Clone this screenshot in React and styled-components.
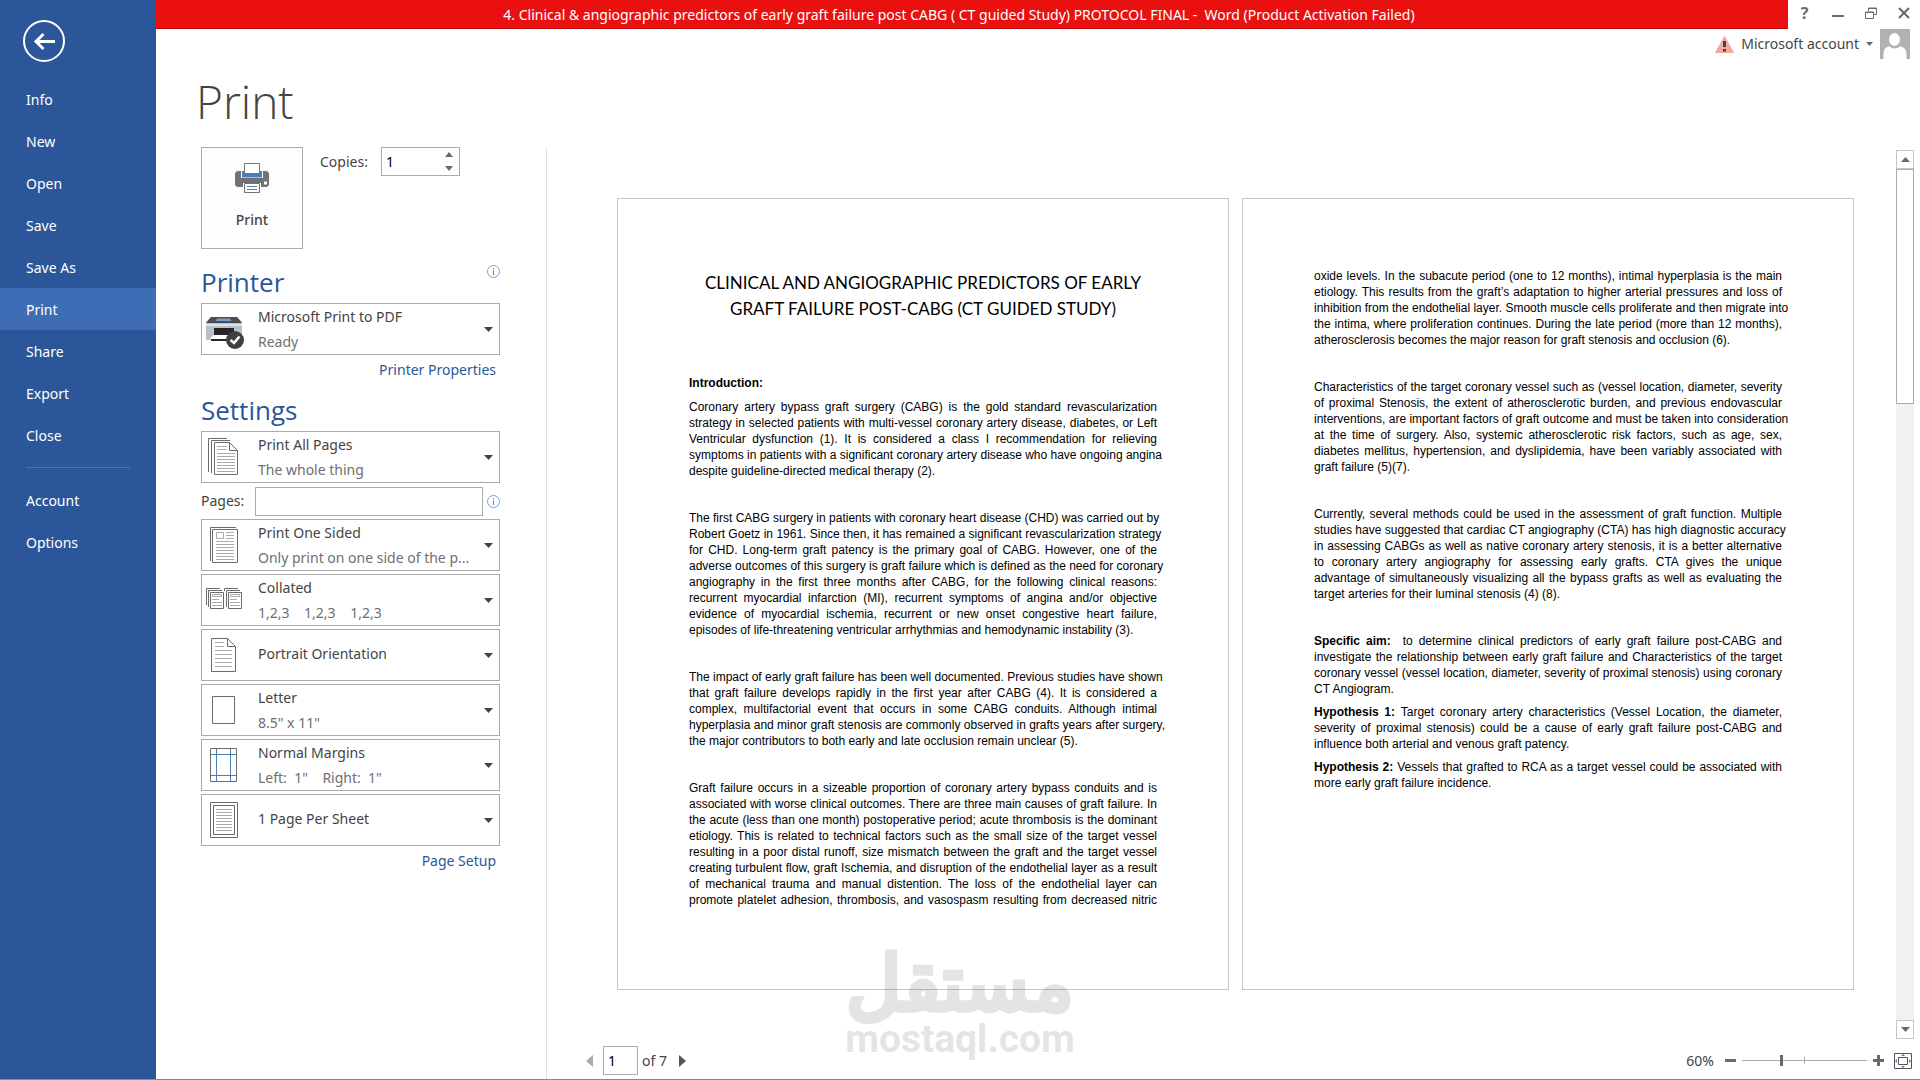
import React from 'react';
import styled, { createGlobalStyle } from 'styled-components';

const ui = '"Noto Sans", "Open Sans", sans-serif';
const line = '#ababab';
const blue = '#2b579a';

const GlobalStyle = createGlobalStyle`
  *, *::before, *::after { box-sizing: border-box; }
  body { margin: 0; background: #fff; color: #444; font: 14px/20px ${ui}; }
  button, input { font: inherit; color: inherit; margin: 0; padding: 0; border-radius: 0; }
  button { background: none; border: 0; cursor: pointer; }
  h1, h2, h3, p { margin: 0; font-weight: 400; }
  svg { display: block; flex: none; }
`;

const Shell = styled.div`
  display: grid;
  grid-template-columns: 156px minmax(0, 1fr);
  min-height: 100vh;
  border-bottom: 1px solid #8a8a8a;
`;

/* ---------- sidebar ---------- */
const Sidebar = styled.aside`
  display: flex;
  flex-direction: column;
  background: ${blue};
  color: #fff;
`;
const BackButton = styled.button`
  width: 42px;
  height: 42px;
  margin: 20px 0 16px 23px;
`;
const NavList = styled.nav`
  display: flex;
  flex-direction: column;
`;
const NavLink = styled.a`
  height: 42px;
  padding-left: 26px;
  line-height: 44px;
  color: #fff;
  text-decoration: none;
  background: ${(p) => (p.$active ? '#3e6db5' : 'transparent')};
`;
const NavRule = styled.hr`
  width: 104px;
  height: 1px;
  margin: 11px 26px;
  border: 0;
  background: #4a74b4;
`;

/* ---------- header ---------- */
const Main = styled.main`
  display: flex;
  flex-direction: column;
  min-width: 0;
`;
const TopBar = styled.header`
  display: flex;
  height: 29px;
`;
const TitleStrip = styled.div`
  flex: 1;
  padding-right: 26px;
  border-bottom: 1px solid #b80c0c;
  background: #ea1010;
  color: #fff;
  text-align: center;
  line-height: 29px;
  white-space: pre;
`;
const WindowButton = styled.button`
  display: flex;
  align-items: center;
  justify-content: center;
  width: 33px;
  height: 26px;
  color: #6a6a6a;
  font-size: 16px;
  font-weight: 700;
`;
const AccountBar = styled.div`
  display: flex;
  justify-content: flex-end;
  padding-right: 10px;
`;
const AccountButton = styled.button`
  display: flex;
  align-items: center;
  height: 30px;
  gap: 7px;
`;
const PageTitle = styled.h1`
  padding: 11px 40px 15px;
  font: 300 46px/62px "Open Sans", "Noto Sans", sans-serif;
`;
const Body = styled.div`
  display: flex;
  flex: 1;
`;

/* ---------- settings column ---------- */
const SettingsPane = styled.section`
  flex: none;
  width: 391px;
  padding: 0 46px 0 45px;
  border-right: 1px solid #e1e1e1;
`;
const PrintRow = styled.div`
  display: flex;
  align-items: flex-start;
  margin-bottom: 12px;
`;
const PrintButton = styled.button`
  display: flex;
  flex-direction: column;
  align-items: center;
  gap: 17px;
  width: 102px;
  height: 102px;
  margin-right: 17px;
  padding-top: 15px;
  border: 1px solid ${line};
  background: #fdfdfd;
  font-weight: 500;
`;
const CopiesLabel = styled.label`
  width: 61px;
  line-height: 30px;
`;
const Spinner = styled.div`
  display: flex;
  width: 79px;
  height: 29px;
  border: 1px solid ${line};
`;
const SpinnerInput = styled.input`
  flex: 1;
  min-width: 0;
  padding-left: 4px;
  border: 0;
  color: #000;
  appearance: textfield;
  &::-webkit-inner-spin-button { appearance: none; }
`;
const SpinnerArrows = styled.div`
  display: grid;
  grid-template-rows: 1fr 1fr;
  width: 20px;
`;
const ArrowButton = styled.button`
  display: flex;
  align-items: center;
  justify-content: center;
`;
const SectionHead = styled.div`
  display: flex;
  justify-content: space-between;
  height: 42px;
  color: ${blue};
`;
const SectionTitle = styled.h2`
  font: 400 26px/42px "Open Sans", "Noto Sans", sans-serif;
`;
const InfoButton = styled.button`
  display: flex;
  align-self: ${(p) => (p.$top ? 'flex-start' : 'center')};
  padding-top: ${(p) => (p.$top ? '4px' : '0')};
`;
const Choices = styled.div`
  display: grid;
  gap: 3px;
`;
const Choice = styled.button`
  display: flex;
  align-items: center;
  width: 100%;
  height: 52px;
  padding-right: 6px;
  border: 1px solid ${line};
  background: #fff;
  text-align: left;
`;
const ChoiceText = styled.span`
  display: flex;
  flex: 1;
  flex-direction: column;
  padding-bottom: ${(p) => (p.$single ? '4px' : '0')};
  line-height: 25px;
  white-space: pre;
`;
const ChoiceDetail = styled.span`
  color: #6f6f6f;
`;
const PaneLink = styled.a`
  display: block;
  padding: 5px 4px 9px 0;
  line-height: 20px;
  color: ${blue};
  text-align: right;
  text-decoration: none;
`;
const PagesRow = styled.div`
  display: flex;
  align-items: center;
  justify-content: space-between;
  height: 30px;
`;
const PagesLabel = styled.label`
  width: 54px;
`;
const PagesInput = styled.input`
  width: 228px;
  height: 29px;
  margin-right: 4px;
  padding: 0 5px;
  border: 1px solid ${line};
`;

/* ---------- preview ---------- */
const Preview = styled.section`
  display: flex;
  flex: 1;
  flex-direction: column;
  min-width: 0;
`;
const Canvas = styled.div`
  display: flex;
  flex: 1;
`;
const Sheets = styled.div`
  display: flex;
  flex: 1;
  align-items: flex-start;
  justify-content: center;
  gap: 13px;
  padding: 51px 42px 48px 70px;
`;
const Sheet = styled.article`
  width: 612px;
  height: 792px;
  padding: ${(p) => (p.$titled ? '71px' : '69px')} 71px 0;
  border: 1px solid #c6c6c6;
  background: #fff;
  color: #000;
  font: 12px/16px "Liberation Sans", Arial, sans-serif;
`;
const DocTitle = styled.h2`
  margin-bottom: 53px;
  font: 400 17px/26px Lato, Carlito, sans-serif;
  text-align: center;
`;
const DocHeading = styled.h3`
  margin-bottom: 8px;
  font-size: 12px;
  font-weight: 700;
`;
const Paragraph = styled.p`
  margin-bottom: ${(p) => (p.$tight ? '7px' : '31px')};
`;
const Line = styled.span`
  display: block;
  white-space: nowrap;
  text-align-last: ${(p) => (p.$last ? 'left' : 'justify')};
`;
const Scrollbar = styled.div`
  display: flex;
  flex-direction: column;
  width: 19px;
  margin: 3px 6px 0 0;
  background: #f1f1f1;
`;
const ScrollButton = styled.button`
  display: flex;
  align-items: center;
  justify-content: center;
  height: 19px;
  border: 1px solid #c6c6c6;
  background: #fff;
`;
const ScrollTrack = styled.div`
  flex: 1;
`;
const ScrollThumb = styled.div`
  height: 235px;
  border: 1px solid ${line};
  background: #fff;
`;
const StatusBar = styled.footer`
  display: flex;
  align-items: center;
  justify-content: space-between;
  height: 40px;
  padding: 3px 8px 0 39px;
`;
const StatusGroup = styled.div`
  display: flex;
  align-items: center;
  gap: ${(p) => p.$gap};
`;
const PageInput = styled.input`
  width: 35px;
  height: 29px;
  margin: 0 4px 0 10px;
  padding-left: 4px;
  border: 1px solid ${line};
  color: #000;
`;
const PageCount = styled.span`
  margin-right: 12px;
`;
const ZoomValue = styled.label`
  margin-right: 5px;
`;
const ZoomSlider = styled.input`
  appearance: none;
  width: 125px;
  height: 13px;
  background:
    linear-gradient(#ababab, #ababab) 62px 50% / 1px 7px no-repeat,
    linear-gradient(#ababab, #ababab) 0 50% / 100% 1px no-repeat;
  &::-webkit-slider-thumb {
    appearance: none;
    width: 3px;
    height: 11px;
    background: #6a6a6a;
  }
`;
const IconButton = styled.button`
  display: flex;
`;
const FitButton = styled(IconButton)`
  margin-left: 4px;
`;

const Watermark = styled.div`
  position: absolute;
  left: 50%;
  top: 939px;
  transform: translateX(-50%);
  color: #000;
  opacity: 0.1;
  text-align: center;
  pointer-events: none;
`;
const WatermarkArabic = styled.div`
  height: 77px;
  font: 700 76px/90px sans-serif;
  -webkit-text-stroke: 3px #000;
`;
const WatermarkLatin = styled.div`
  font: 700 39px/46px Roboto, sans-serif;
`;

/* ---------- drawings ---------- */
const Tri = ({ dir = 'down', w = 9, h = 5, fill = '#6a6a6a' }) => {
  const d = {
    down: `M0 0H${w}L${w / 2} ${h}Z`,
    up: `M0 ${h}H${w}L${w / 2} 0Z`,
    left: `M${w} 0V${h}L0 ${h / 2}Z`,
    right: `M0 0V${h}L${w} ${h / 2}Z`,
  }[dir];
  return <svg width={w} height={h} aria-hidden="true"><path d={d} fill={fill} /></svg>;
};

const InfoIcon = () => (
  <svg width="13" height="13" viewBox="0 0 13 13" fill="none" stroke="#7c9fd3" aria-hidden="true">
    <circle cx="6.5" cy="6.5" r="6" />
    <path d="M6.5 5.5V10M6.5 3V4.3" stroke="#4f7cc0" />
  </svg>
);

const BigPrinter = () => (
  <svg width="34" height="30" viewBox="0 0 34 30" aria-hidden="true">
    <path d="M2 8H32L34 10V22L32 24H2L0 22V10Z" fill="#737373" />
    <path d="M6 8H28V15H6Z" fill="#fff" />
    <path d="M7 8H27V14.5H7Z" fill="#4a7ebb" />
    <path d="M9.500 0.500H24.500V10.500H9.500Z" fill="#fff" stroke="#737373" />
    <path d="M29 18.500H32V21.500H29Z" fill="#fff" />
    <path d="M8 20H26V24H8Z" fill="#fff" />
    <path d="M9.500 20.500H24.500V29.500H9.500Z" fill="#fff" stroke="#737373" />
    <path d="M12 23.500H22M12 26.500H22" stroke="#4a7ebb" />
  </svg>
);

const rows = (x1, x2, from, to, step) => {
  let d = '';
  for (let y = from; y <= to; y += step) d += `M${x1} ${y}H${x2}`;
  return d;
};

const icons = {
  printer: (
    <>
      <path d="M9 13H35L40 18V33L36 36H4V18Z" fill="#b9c0c9" />
      <path d="M9 13H35L40 19H4Z" fill="#4d4d4d" />
      <path d="M15 14.500H28L29.500 17H13.500Z" fill="#6fa0dc" />
      <path d="M4 20H40V22H4Z" fill="#dfe4ea" />
      <path d="M12 24H32V32H12Z" fill="#262626" />
      <path d="M11 31H32L30 35H8Z" fill="#fff" />
      <path d="M9 35H32V37H9Z" fill="#262626" />
      <circle cx="33" cy="36" r="9" fill="#404040" />
      <path d="M28.500 36L32 39L37.500 32.500" stroke="#fff" strokeWidth="2.500" />
    </>
  ),
  all: (
    <g stroke="#6a6a6a">
      <path d="M6.500 40V6.500H25M9.500 41V8.500H28" />
      <path d="M12.500 10.500H27.500L35.500 18.500V42.500H12.500Z" fill="#fff" />
      <path d="M27.500 10.500V18.500H35.500" />
      <path d={'M15 14.500H25M15 17.500H25' + rows(15, 33, 21.5, 39.5, 3)} stroke="#ababab" />
    </g>
  ),
  sided: (
    <g stroke="#6a6a6a">
      <path d="M8.500 41V7.500H34" />
      <path d="M10.500 9.500H35.500V42.500H10.500Z" fill="#fff" />
      <path d="M14.500 12.500H21.500V18.500H14.500Z" stroke="#ababab" />
      <path d={rows(24, 32, 12.5, 18.5, 3) + rows(14, 32, 21.5, 39.5, 3)} stroke="#ababab" />
    </g>
  ),
  collated: (
    <g stroke="#6a6a6a">
      <path d="M4.500 30V13.500H18M6.500 32V15.500H20M22.500 16V13.500H36M24.500 32V15.500H38" />
      <path d="M8.500 17.500H21.500V33.500H8.500ZM26.500 17.500H39.500V33.500H26.500Z" fill="#fff" />
      <path
        d="M10.500 19.500H19.500V21.500H10.500ZM28.500 19.500H37.500V21.500H28.500ZM10 24.500H17M10 27.500H20M10 30.500H20M28 24.500H35M28 27.500H38M28 30.500H38"
        stroke="#ababab"
      />
    </g>
  ),
  portrait: (
    <g stroke="#6a6a6a">
      <path d="M9.500 8.500H25.500L33.500 16.500V41.500H9.500Z" />
      <path d="M25.500 8.500V16.500H33.500" />
      <path d={'M13 12.500H22M13 16.500H22' + rows(13, 30, 20.5, 36.5, 4)} stroke="#ababab" />
    </g>
  ),
  letter: <path d="M10.500 11.500H32.500V38.500H10.500Z" stroke="#6a6a6a" />,
  margins: (
    <g>
      <path d="M8.500 8.500H34.500V41.500H8.500Z" stroke="#6a6a6a" />
      <path d="M14.500 9V41M28.500 9V41M9 14.500H34M9 35.500H34" stroke="#4a7ebb" />
    </g>
  ),
  sheet: (
    <g stroke="#6a6a6a">
      <path d="M8.500 7.500H35.500V42.500H8.500Z" />
      <path d="M11.500 10.500H32.500V39.500H11.500Z" />
      <path d={rows(14, 30, 14.5, 36.5, 3)} stroke="#ababab" />
    </g>
  ),
};

const ChoiceIcon = ({ name }) => (
  <svg width="56" height="50" viewBox="0 0 56 50" fill="none" aria-hidden="true">{icons[name]}</svg>
);

const Option = ({ icon, title, detail }) => (
  <Choice type="button" aria-haspopup="listbox">
    <ChoiceIcon name={icon} />
    <ChoiceText $single={!detail}>
      <span>{title}</span>
      {detail && <ChoiceDetail>{detail}</ChoiceDetail>}
    </ChoiceText>
    <Tri fill="#444" />
  </Choice>
);

/* ---------- content ---------- */
const navTop = ['Info', 'New', 'Open', 'Save', 'Save As', 'Print', 'Share', 'Export', 'Close'];
const navBottom = ['Account', 'Options'];

const afterPages = [
  { icon: 'sided', title: 'Print One Sided', detail: 'Only print on one side of the p...' },
  { icon: 'collated', title: 'Collated', detail: '1,2,3    1,2,3    1,2,3' },
  { icon: 'portrait', title: 'Portrait Orientation' },
  { icon: 'letter', title: 'Letter', detail: '8.5" x 11"' },
  { icon: 'margins', title: 'Normal Margins', detail: 'Left:  1"    Right:  1"' },
  { icon: 'sheet', title: '1 Page Per Sheet' },
];

const pageOne = [
  { lines: [
    'Coronary artery bypass graft surgery (CABG) is the gold standard revascularization',
    'strategy in selected patients with multi-vessel coronary artery disease, diabetes, or Left',
    'Ventricular dysfunction (1). It is considered a class I recommendation for relieving',
    'symptoms in patients with a significant coronary artery disease who have ongoing angina',
    'despite guideline-directed medical therapy (2).',
  ] },
  { lines: [
    'The first CABG surgery in patients with coronary heart disease (CHD) was carried out by',
    'Robert Goetz in 1961. Since then, it has remained a significant revascularization strategy',
    'for CHD. Long-term graft patency is the primary goal of CABG. However, one of the',
    'adverse outcomes of this surgery is graft failure which is defined as the need for coronary',
    'angiography in the first three months after CABG, for the following clinical reasons:',
    'recurrent myocardial infarction (MI), recurrent symptoms of angina and/or objective',
    'evidence of myocardial ischemia, recurrent or new onset congestive heart failure,',
    'episodes of life-threatening ventricular arrhythmias and hemodynamic instability (3).',
  ] },
  { lines: [
    'The impact of early graft failure has been well documented. Previous studies have shown',
    'that graft failure develops rapidly in the first year after CABG (4). It is considered a',
    'complex, multifactorial event that occurs in some CABG conduits. Although intimal',
    'hyperplasia and minor graft stenosis are commonly observed in grafts years after surgery,',
    'the major contributors to both early and late occlusion remain unclear (5).',
  ] },
  { continues: true, lines: [
    'Graft failure occurs in a sizeable proportion of coronary artery bypass conduits and is',
    'associated with worse clinical outcomes. There are three main causes of graft failure. In',
    'the acute (less than one month) postoperative period; acute thrombosis is the dominant',
    'etiology. This is related to technical factors such as the small size of the target vessel',
    'resulting in a poor distal runoff, size mismatch between the graft and the target vessel',
    'creating turbulent flow, graft Ischemia, and disruption of the endothelial layer as a result',
    'of mechanical trauma and manual distention. The loss of the endothelial layer can',
    'promote platelet adhesion, thrombosis, and vasospasm resulting from decreased nitric',
  ] },
];

const pageTwo = [
  { lines: [
    'oxide levels. In the subacute period (one to 12 months), intimal hyperplasia is the main',
    'etiology. This results from the graft’s adaptation to higher arterial pressures and loss of',
    'inhibition from the endothelial layer. Smooth muscle cells proliferate and then migrate into',
    'the intima, where proliferation continues. During the late period (more than 12 months),',
    'atherosclerosis becomes the major reason for graft stenosis and occlusion (6).',
  ] },
  { lines: [
    'Characteristics of the target coronary vessel such as (vessel location, diameter, severity',
    'of proximal Stenosis, the extent of atherosclerotic burden, and previous endovascular',
    'interventions, are important factors of graft outcome and must be taken into consideration',
    'at the time of surgery. Also, systemic atherosclerotic risk factors, such as age, sex,',
    'diabetes mellitus, hypertension, and dyslipidemia, have been variably associated with',
    'graft failure (5)(7).',
  ] },
  { lines: [
    'Currently, several methods could be used in the assessment of graft function. Multiple',
    'studies have suggested that cardiac CT angiography (CTA) has high diagnostic accuracy',
    'in assessing CABGs as well as native coronary artery stenosis, it is a better alternative',
    'to coronary artery angiography for assessing early grafts. CTA gives the unique',
    'advantage of simultaneously visualizing all the bypass grafts as well as evaluating the',
    'target arteries for their luminal stenosis (4) (8).',
  ] },
  { tight: true, lead: 'Specific aim:', lines: [
    '\u00a0 to determine clinical predictors of early graft failure post-CABG and',
    'investigate the relationship between early graft failure and Characteristics of the target',
    'coronary vessel (vessel location, diameter, severity of proximal stenosis) using coronary',
    'CT Angiogram.',
  ] },
  { tight: true, lead: 'Hypothesis 1:', lines: [
    '\u00a0Target coronary artery characteristics (Vessel Location, the diameter,',
    'severity of proximal stenosis) could be a cause of early graft failure post-CABG and',
    'influence both arterial and venous graft patency.',
  ] },
  { tight: true, lead: 'Hypothesis 2:', lines: [
    '\u00a0Vessels that grafted to RCA as a target vessel could be associated with',
    'more early graft failure incidence.',
  ] },
];

const Prose = ({ items }) =>
  items.map(({ lines, lead, tight, continues }) => (
    <Paragraph key={lines[0]} $tight={tight}>
      {lines.map((text, i) => (
        <Line key={text} $last={i === lines.length - 1 && !continues}>
          {i === 0 && lead && <b>{lead}</b>}
          {text}{' '}
        </Line>
      ))}
    </Paragraph>
  ));

export default function App() {
  return (
    <>
      <GlobalStyle />
      <Shell>
        <Sidebar>
          <BackButton type="button" aria-label="Back">
            <svg width="42" height="42" viewBox="0 0 42 42" fill="none" stroke="#fff" aria-hidden="true">
              <circle cx="21" cy="21" r="20" strokeWidth="2" />
              <path d="M13 21.500H32" strokeWidth="3" />
              <path d="M20.500 14L13 21.500L20.500 29" strokeWidth="3" />
            </svg>
          </BackButton>
          <NavList>
            {navTop.map((n) => <NavLink key={n} href="#" $active={n === 'Print'}>{n}</NavLink>)}
            <NavRule />
            {navBottom.map((n) => <NavLink key={n} href="#">{n}</NavLink>)}
          </NavList>
        </Sidebar>

        <Main>
          <TopBar>
            <TitleStrip>
              {'4. Clinical & angiographic predictors of early graft failure post CABG ( CT guided Study) PROTOCOL FINAL -  Word (Product Activation Failed)'}
            </TitleStrip>
            <WindowButton type="button">?</WindowButton>
            <WindowButton type="button" aria-label="Minimize">
              <svg width="12" height="12"><path d="M0 8H12V10H0Z" fill="#6a6a6a" /></svg>
            </WindowButton>
            <WindowButton type="button" aria-label="Restore">
              <svg width="12" height="12" fill="none" stroke="#6a6a6a">
                <path d="M3.500 4V1H11.500V7.500H9M3 1.500H12" />
                <path d="M0.500 5H8.500V11.500H0.500ZM0 5.500H9" />
              </svg>
            </WindowButton>
            <WindowButton type="button" aria-label="Close window">
              <svg width="12" height="12"><path d="M1 1L11 11M11 1L1 11" stroke="#6a6a6a" strokeWidth="2" /></svg>
            </WindowButton>
          </TopBar>

          <AccountBar>
            <AccountButton type="button">
              <svg width="19" height="17" viewBox="0 0 19 17" aria-hidden="true">
                <path d="M9.500 0.500L18.500 16.500H0.500Z" fill="#f4a9a0" stroke="#f4a9a0" strokeLinejoin="round" />
                <path d="M8 5H11V11H8ZM8 13H11V15.500H8Z" fill="#444" />
              </svg>
              <span>Microsoft account</span>
              <Tri w={7} h={4} />
              <svg width="30" height="30" viewBox="0 0 30 30" aria-hidden="true">
                <path d="M0 0H30V30H0Z" fill="#b1b1b1" />
                <ellipse cx="14.500" cy="10.500" rx="5.500" ry="6.500" fill="#fff" />
                <path d="M3.500 30V25C3.500 20 6 17.500 10 17.500C12 20 17.500 20 19.500 17.500C23.500 17.500 26.500 20 26.500 25V30Z" fill="#fff" />
              </svg>
            </AccountButton>
          </AccountBar>

          <PageTitle>Print</PageTitle>

          <Body>
            <SettingsPane>
              <PrintRow>
                <PrintButton type="button"><BigPrinter />Print</PrintButton>
                <CopiesLabel htmlFor="copies">Copies:</CopiesLabel>
                <Spinner>
                  <SpinnerInput id="copies" type="number" defaultValue="1" />
                  <SpinnerArrows>
                    <ArrowButton type="button" aria-label="More copies"><Tri dir="up" w={8} /></ArrowButton>
                    <ArrowButton type="button" aria-label="Fewer copies"><Tri w={8} /></ArrowButton>
                  </SpinnerArrows>
                </Spinner>
              </PrintRow>

              <SectionHead>
                <SectionTitle>Printer</SectionTitle>
                <InfoButton type="button" $top aria-label="Printer status"><InfoIcon /></InfoButton>
              </SectionHead>
              <Option icon="printer" title="Microsoft Print to PDF" detail="Ready" />
              <PaneLink href="#">Printer Properties</PaneLink>

              <SectionHead><SectionTitle>Settings</SectionTitle></SectionHead>
              <Choices>
                <Option icon="all" title="Print All Pages" detail="The whole thing" />
                <PagesRow>
                  <PagesLabel htmlFor="pages">Pages:</PagesLabel>
                  <PagesInput id="pages" type="text" />
                  <InfoButton type="button" aria-label="Page range help"><InfoIcon /></InfoButton>
                </PagesRow>
                {afterPages.map((o) => <Option key={o.title} {...o} />)}
              </Choices>
              <PaneLink href="#">Page Setup</PaneLink>
            </SettingsPane>

            <Preview>
              <Canvas>
                <Sheets>
                  <Sheet $titled>
                    <DocTitle>
                      CLINICAL AND ANGIOGRAPHIC PREDICTORS OF EARLY<br />
                      GRAFT FAILURE POST-CABG (CT GUIDED STUDY)
                    </DocTitle>
                    <DocHeading>Introduction:</DocHeading>
                    <Prose items={pageOne} />
                  </Sheet>
                  <Sheet><Prose items={pageTwo} /></Sheet>
                </Sheets>
                <Scrollbar>
                  <ScrollButton type="button" aria-label="Scroll up"><Tri dir="up" /></ScrollButton>
                  <ScrollTrack><ScrollThumb /></ScrollTrack>
                  <ScrollButton type="button" aria-label="Scroll down"><Tri /></ScrollButton>
                </Scrollbar>
              </Canvas>

              <StatusBar>
                <StatusGroup $gap="0">
                  <IconButton type="button" aria-label="Previous page"><Tri dir="left" w={7} h={12} fill="#ababab" /></IconButton>
                  <PageInput type="text" aria-label="Current page" defaultValue="1" />
                  <PageCount>of 7</PageCount>
                  <IconButton type="button" aria-label="Next page"><Tri dir="right" w={7} h={12} fill="#555" /></IconButton>
                </StatusGroup>
                <StatusGroup $gap="6px">
                  <ZoomValue htmlFor="zoom">60%</ZoomValue>
                  <IconButton type="button" aria-label="Zoom out">
                    <svg width="11" height="11"><path d="M0 4H11V7H0Z" fill="#6a6a6a" /></svg>
                  </IconButton>
                  <ZoomSlider id="zoom" type="range" min="0" max="100" defaultValue="31" />
                  <IconButton type="button" aria-label="Zoom in">
                    <svg width="11" height="11"><path d="M0 4H11V7H0ZM4 0H7V11H4Z" fill="#6a6a6a" /></svg>
                  </IconButton>
                  <FitButton type="button" aria-label="Zoom to page">
                    <svg width="18" height="16" viewBox="0 0 18 16" fill="none">
                      <path d="M0.500 0.500H17.500V15.500H0.500Z" stroke="#555" />
                      <path d="M4.500 4.500H13.500V11.500H4.500Z" stroke="#555" />
                      <path d="M7 3H11L9 1ZM7 13H11L9 15ZM3 6V10L1 8ZM15 6V10L17 8Z" fill="#4a7ebb" />
                    </svg>
                  </FitButton>
                </StatusGroup>
              </StatusBar>
            </Preview>
          </Body>
        </Main>
      </Shell>

      <Watermark>
        <WatermarkArabic lang="ar">مستقل</WatermarkArabic>
        <WatermarkLatin>mostaql.com</WatermarkLatin>
      </Watermark>
    </>
  );
}
